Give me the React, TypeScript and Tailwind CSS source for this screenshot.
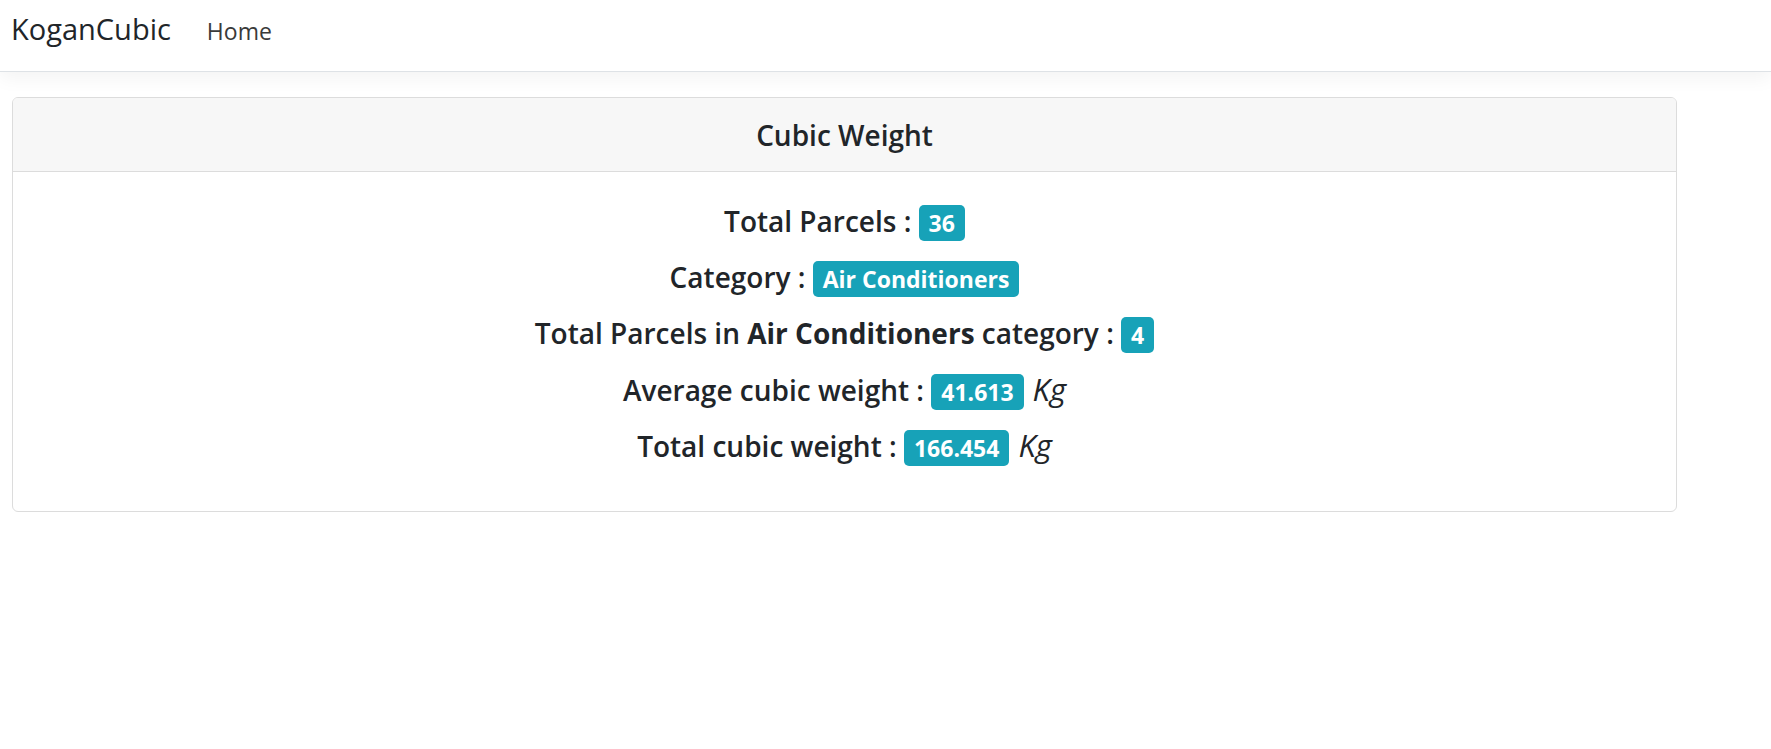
const rows = [
  { label: "Total Parcels :", value: "36" },
  { label: "Category :", value: "Air Conditioners" },
  { label: "cat", value: "4" },
  { label: "Average cubic weight :", value: "41.613", unit: "Kg" },
  { label: "Total cubic weight :", value: "166.454", unit: "Kg" },
];

function Badge({ children }: { children: React.ReactNode }) {
  return (
    <span className="inline-block rounded-[5px] bg-[#17a2b8] px-[10px] pt-[7px] pb-[6px] align-baseline text-[23px] leading-none font-bold text-white">
      {children}
    </span>
  );
}

export default function App() {
  return (
    <div className="min-h-screen bg-white font-['Open_Sans',sans-serif] text-[#212529]">
      <nav className="relative z-10 flex h-[72px] items-baseline border-b border-[#dee2e6] bg-white pl-[11px] pt-[14px] shadow-[0_6px_18px_rgba(0,0,0,0.05)]">
        <a className="mr-[24px] text-[29px] leading-none text-[#212529]">KoganCubic</a>
        <a className="px-[12px] text-[23px] leading-none text-[#3a3a3a]">Home</a>
      </nav>

      <div className="ml-[12px] mt-[25px] w-[1665px] overflow-hidden rounded-[6px] border border-[#dcdcdc]">
        <div className="flex h-[74px] items-center justify-center border-b border-[#dcdcdc] bg-[#f7f7f7]">
          <h5 className="text-[28px] font-semibold leading-none">Cubic Weight</h5>
        </div>
        <div className="flex flex-col items-center gap-[20px] px-[22px] pt-[31px] pb-[48px]">
          {rows.map((r, i) => (
            <p key={i} className="h-[36px] text-[28px] font-semibold leading-[36px]">
              {r.label === "cat" ? (
                <>
                  Total Parcels in <b className="font-bold">Air Conditioners</b> category :
                </>
              ) : (
                r.label
              )}{" "}
              <Badge>{r.value}</Badge>
              {r.unit && <i className="ml-[9px] text-[31px] font-medium">{r.unit}</i>}
            </p>
          ))}
        </div>
      </div>
    </div>
  );
}
